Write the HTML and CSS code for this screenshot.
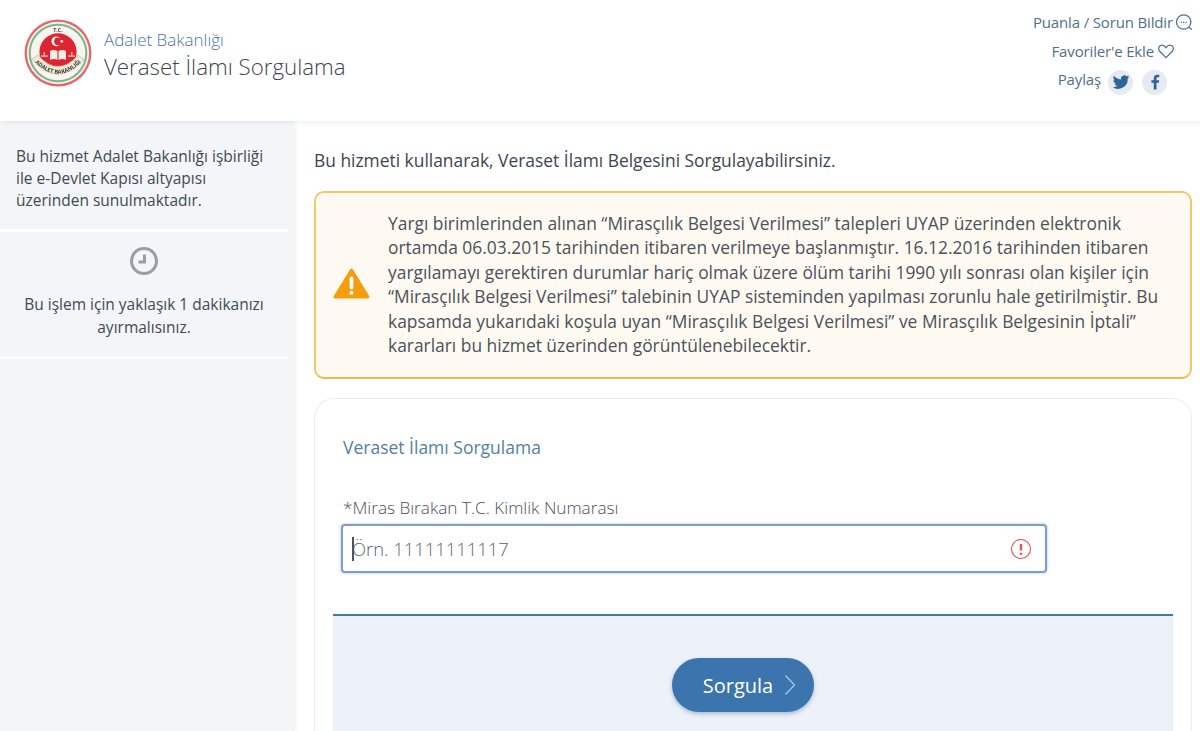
FILE: index.html
```html
<!DOCTYPE html>
<html lang="tr">
<head>
<meta charset="utf-8">
<title>Veraset İlamı Sorgulama</title>
<link rel="stylesheet" href="styles.css">
</head>
<body>
<header class="header">
  <div class="brand">
    <svg class="logo" viewBox="0 0 64 64" aria-hidden="true">
      <defs><path id="seal-arc" d="M9.500 40 Q32 63 54.500 40"/></defs>
      <circle cx="32" cy="32" r="31.500" fill="#e2686c"/>
      <circle cx="32" cy="32" r="29.300" fill="#f6f1e6"/>
      <circle cx="32" cy="32" r="27.600" fill="#79b592"/>
      <circle cx="32" cy="32" r="25.700" fill="#f8f5ee"/>
      <text class="seal-tc" x="32" y="12.500" text-anchor="middle">T.C.</text>
      <circle cx="32" cy="31" r="17.500" fill="#dc2530"/>
      <path d="M7.500 38 Q32 66 56.500 38 L51 34 Q32 55 13 34Z" fill="#f1e8d6" stroke="#b6a98f" stroke-width=".5"/>
      <text class="seal-name"><textPath href="#seal-arc" startOffset="50%" text-anchor="middle">ADALET BAKANLIĞI</textPath></text>
      <circle cx="30.500" cy="21" r="4.600" fill="#fff"/>
      <circle cx="32" cy="21" r="3.700" fill="#dc2530"/>
      <circle cx="35.500" cy="21" r="1.300" fill="#fff"/>
      <path d="M24.500 30 Q28 28.500 31.500 30v8.500Q28 37 24.500 38.500ZM32.500 30Q36 28.500 39.500 30v8.500Q36 37 32.500 38.500Z" fill="#f7ece6"/>
      <path d="M16 35h6.500M41.500 35H48M19 31v4M45 31v4" stroke="#f3cfc8" stroke-width="1.100" fill="none"/>
    </svg>
    <div class="brand-text">
      <div class="ministry">Adalet Bakanlığı</div>
      <div class="service">Veraset İlamı Sorgulama</div>
    </div>
  </div>
  <div class="actions">
    <div class="action">Puanla / Sorun Bildir
      <svg class="act-icon" viewBox="0 0 18 18" aria-hidden="true"><circle cx="8.700" cy="9" r="7.200"/><path d="M5.800 9.400h5.800" stroke-dasharray="1.200 1.100"/><path d="M13.600 14.200l3.400 2.300"/></svg>
    </div>
    <div class="action action-fav">Favoriler'e Ekle
      <svg class="act-icon" viewBox="0 0 18 18" aria-hidden="true"><path d="M9 15.600 2.600 9.200C.4 6.800 2 3.200 5 3.200c1.800 0 3 1 4 2.400 1-1.400 2.200-2.400 4-2.400 3 0 4.600 3.600 2.400 6Z"/></svg>
    </div>
    <div class="action action-share"><span class="share-label">Paylaş</span>
      <span class="social"><svg viewBox="0 0 24 24" aria-hidden="true"><path fill="#2f6496" d="M22 5.800c-.7.3-1.500.5-2.300.6.800-.5 1.500-1.300 1.800-2.200-.8.5-1.700.8-2.600 1a4.100 4.100 0 0 0-7 3.700C8.500 8.700 5.500 7.100 3.400 4.600c-1.100 1.900-.5 4.300 1.300 5.500-.7 0-1.300-.2-1.900-.5 0 2 1.400 3.700 3.300 4.100-.6.200-1.200.2-1.900.1.500 1.600 2 2.800 3.800 2.800A8.300 8.300 0 0 1 2 18.300 11.600 11.600 0 0 0 20 8c.8-.6 1.500-1.300 2-2.200Z"/></svg></span>
      <span class="social"><svg viewBox="0 0 24 24" aria-hidden="true"><path fill="#2f6496" d="M13.800 21v-8h2.800l.5-3.200h-3.300V7.800c0-.9.300-1.500 1.600-1.500h1.700V3.400c-.3 0-1.300-.1-2.400-.1-2.500 0-4.200 1.500-4.200 4.200v2.300H7.700V13h2.800v8Z"/></svg></span>
    </div>
  </div>
</header>
<div class="page">
  <aside class="sidebar">
    <p class="side-block">Bu hizmet Adalet Bakanlığı işbirliği ile e-Devlet Kapısı altyapısı üzerinden sunulmaktadır.</p>
    <div class="side-time">
      <svg class="clock" viewBox="0 0 30 30" aria-hidden="true"><circle cx="15" cy="15" r="12.500"/><path d="M15.500 8.500v7.500H9.500"/></svg>
      <p>Bu işlem için yaklaşık 1 dakikanızı ayırmalısınız.</p>
    </div>
  </aside>
  <main class="content">
    <p class="intro">Bu hizmeti kullanarak, Veraset İlamı Belgesini Sorgulayabilirsiniz.</p>
    <section class="alert">
      <svg class="warn" viewBox="0 0 36 30" aria-hidden="true"><path fill="#f59d0e" stroke="#f59d0e" stroke-width="3" stroke-linejoin="round" d="M18 2 2 28h32Z"/><path d="M18 10v9" stroke="#fff" stroke-width="3.600" stroke-linecap="round"/><circle cx="18" cy="24" r="2" fill="#fff"/></svg>
      <p>Yargı birimlerinden alınan “Mirasçılık Belgesi Verilmesi” talepleri UYAP üzerinden elektronik ortamda 06.03.2015 tarihinden itibaren verilmeye başlanmıştır. 16.12.2016 tarihinden itibaren yargılamayı gerektiren durumlar hariç olmak üzere ölüm tarihi 1990 yılı sonrası olan kişiler için “Mirasçılık Belgesi Verilmesi” talebinin UYAP sisteminden yapılması zorunlu hale getirilmiştir. Bu kapsamda yukarıdaki koşula uyan “Mirasçılık Belgesi Verilmesi” ve Mirasçılık Belgesinin İptali” kararları bu hizmet üzerinden görüntülenebilecektir.</p>
    </section>
    <section class="card">
      <h2 class="card-title">Veraset İlamı Sorgulama</h2>
      <label class="field-label" for="tc">*Miras Bırakan T.C. Kimlik Numarası</label>
      <div class="input-box">
        <span class="caret"></span>
        <input id="tc" class="input" type="text" placeholder="Örn. 11111111117">
        <svg class="err" viewBox="0 0 22 22" aria-hidden="true"><circle cx="11" cy="11" r="9.500"/><path d="M11 6v6.500" stroke-width="2.400"/><path d="M11 14.800v2" stroke-width="2.400"/></svg>
      </div>
      <div class="submit-bar">
        <button class="submit" type="button">Sorgula
          <svg viewBox="0 0 12 22" aria-hidden="true"><path d="M1.500 1.500 10.500 11l-9 9.500"/></svg>
        </button>
      </div>
    </section>
  </main>
</div>
</body>
</html>
```
FILE: styles.css
```css
* { box-sizing: border-box; }
html, body { margin: 0; height: 731px; overflow: hidden; }
body {
  background: #fff;
  font-family: "Open Sans", "Noto Sans", sans-serif;
  color: #3e4a56;
  display: flex;
  flex-direction: column;
}
p { margin: 0; }

.header {
  height: 121px;
  flex: none;
  display: flex;
  justify-content: space-between;
  align-items: flex-start;
  padding: 0 7px 0 24px;
  background: #fff;
  box-shadow: 0 1px 5px rgba(60, 70, 90, .10);
  position: relative;
  z-index: 1;
}
.brand { display: flex; align-items: center; gap: 12px; padding-top: 19px; }
.logo { width: 68px; height: 68px; flex: none; filter: blur(.4px); }
.seal-tc { font: 700 5px "Open Sans", sans-serif; fill: #444; }
.seal-name { font: 700 5.200px "Open Sans", sans-serif; fill: #3d3a36; }
.brand-text { margin-top: 3px; }
.ministry { font-size: 17px; font-weight: 300; line-height: 24px; color: #4a76a0; }
.service { font-size: 22.300px; font-weight: 300; line-height: 30px; color: #3e4650; }

.actions { display: flex; flex-direction: column; align-items: flex-end; padding-top: 7px; color: #50708f; font-size: 15px; font-weight: 400; letter-spacing: -.15px; }
.action { display: flex; align-items: center; justify-content: flex-end; gap: 2px; height: 29px; }
.action-fav { margin-right: 18px; gap: 3px; }
.action-share { margin-right: 26px; gap: 7px; }
.share-label { margin-top: -1px; }
.act-icon { width: 18px; height: 18px; fill: none; stroke: #4f7390; stroke-width: 1.300; }
.social { width: 25px; height: 25px; border-radius: 50%; background: #e6eaf1; display: flex; align-items: center; justify-content: center; margin-top: 5px; }
.social + .social { margin-left: 2px; }
.social svg { width: 20px; height: 20px; }

.page { flex: 1; display: flex; min-height: 0; }
.sidebar { width: 295px; flex: none; background: #f3f5f8; padding-top: 24px; box-shadow: 1px 0 3px rgba(60, 70, 90, .06); }
.side-block { width: 288px; padding: 0 16px 18px; font-size: 15.500px; line-height: 22px; color: #414a54; border-bottom: 3px solid #fff; }
.side-time { width: 288px; padding: 14px 16px 17px; text-align: center; font-size: 15.500px; line-height: 23px; color: #414a54; border-bottom: 3px solid #fff; }
.clock { display: block; width: 30px; height: 30px; margin: 0 auto 17px; fill: none; stroke: #9a9ea3; stroke-width: 3; }

.content { flex: 1; min-width: 0; padding: 28px 8px 0 19px; }
.intro { font-size: 17.400px; line-height: 22px; color: #3c4650; }
.alert {
  margin-top: 20px;
  height: 188px;
  display: flex;
  align-items: center;
  gap: 18px;
  padding: 0 24px 0 17px;
  background: #fffaf1;
  border: 2px solid #f0c869;
  border-bottom-color: #f1b94a;
  border-radius: 10px;
}
.alert p { font-size: 17.400px; line-height: 24.500px; color: #4a525b; margin-top: -2px; }
.warn { width: 37px; height: 31px; flex: none; margin-top: -3px; }

.card {
  margin-top: 19px;
  height: 400px;
  padding: 35px 18px 0;
  border: 1px solid #ebedf0;
  border-bottom: 0;
  border-radius: 20px 20px 0 0;
}
.card-title { margin: 0 0 0 10px; font-size: 17.500px; font-weight: 400; line-height: 26px; color: #56809f; }
.field-label { display: block; margin: 37px 0 5px 10px; font-size: 17.200px; font-weight: 300; line-height: 22px; color: #4a525b; }
.input-box {
  position: relative;
  margin-left: 8px;
  width: 706px;
  height: 49px;
  display: flex;
  align-items: center;
  background: #fff;
  border: 2px solid #7f9fca;
  border-radius: 4px;
  box-shadow: 0 0 3px rgba(90, 130, 190, .5);
}
.caret { position: absolute; left: 9px; top: 11px; width: 2px; height: 24px; background: #4d5560; }
.input { flex: 1; min-width: 0; height: 100%; border: 0; outline: 0; padding: 0 0 0 9px; background: transparent; font: 300 18.400px "Open Sans", sans-serif; color: #4a525b; }
.input::placeholder { color: #5f656c; opacity: 1; }
.err { width: 22px; height: 22px; flex: none; margin-right: 13px; fill: none; stroke: #d9534f; stroke-width: 1.100; }
.submit-bar {
  margin-top: 41px;
  height: 140px;
  display: flex;
  justify-content: center;
  padding-top: 42px;
  background: #edf2f9;
  border-top: 2px solid #3f7aa8;
  align-items: flex-start;
}
.submit {
  width: 142px;
  height: 54px;
  margin-right: 20px;
  padding: 0 0 0 13px;
  display: flex;
  align-items: center;
  justify-content: center;
  gap: 11px;
  border: 0;
  border-radius: 27px;
  background: #3c75ad;
  box-shadow: 0 2px 4px rgba(40, 80, 130, .35);
  color: #fff;
  font: 400 20px "Open Sans", sans-serif;
}
.submit svg { width: 12px; height: 22px; fill: none; stroke: #a9c5e2; stroke-width: 1.300; }
```
